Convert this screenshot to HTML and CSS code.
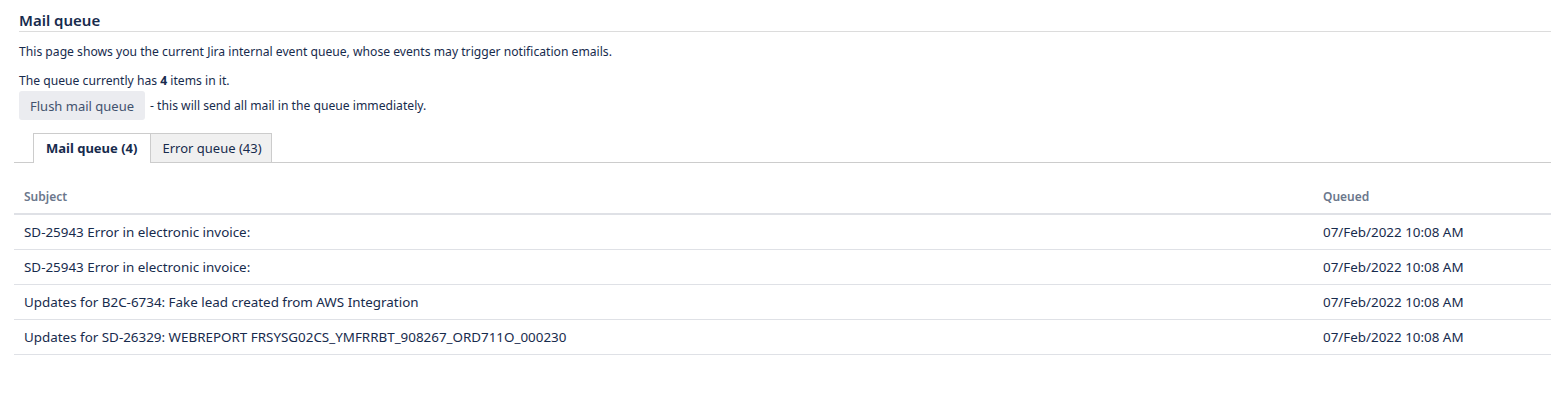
FILE: index.html
```html
<!DOCTYPE html>
<html lang="en">
<head>
    <meta charset="UTF-8">
    <title>Mail queue</title>
    <link rel="stylesheet" href="styles.css">
</head>
<body>
    <div class="page">
        <h2 class="page-title">Mail queue</h2>
        <p class="intro">This page shows you the current Jira internal event queue, whose events may trigger notification emails.</p>
        <p class="count">The queue currently has <strong>4</strong> items in it.</p>
        <div class="flush">
            <button class="flush-button">Flush mail queue</button>
            <span>- this will send all mail in the queue immediately.</span>
        </div>
    </div>

    <ul class="tabs">
        <li class="tab active">Mail queue (4)</li>
        <li class="tab">Error queue (43)</li>
    </ul>

    <table class="queue">
        <thead>
            <tr>
                <th>Subject</th>
                <th class="queued">Queued</th>
            </tr>
        </thead>
        <tbody>
            <tr>
                <td>SD-25943 Error in electronic invoice:</td>
                <td>07/Feb/2022 10:08 AM</td>
            </tr>
            <tr>
                <td>SD-25943 Error in electronic invoice:</td>
                <td>07/Feb/2022 10:08 AM</td>
            </tr>
            <tr>
                <td>Updates for B2C-6734: Fake lead created from AWS Integration</td>
                <td>07/Feb/2022 10:08 AM</td>
            </tr>
            <tr>
                <td>Updates for SD-26329: WEBREPORT FRSYSG02CS_YMFRRBT_908267_ORD711O_000230</td>
                <td>07/Feb/2022 10:08 AM</td>
            </tr>
        </tbody>
    </table>
</body>
</html>
```

FILE: styles.css
```css
body {
    margin: 0;
    padding: 0 0 0 14px;
    font-family: "Noto Sans", Arial, sans-serif;
    font-size: 12px;
    color: #172b4d;
    background: #fff;
}
.page {
    padding: 10px 0 0 5px;
}
.page-title {
    margin: 0;
    font-size: 15px;
    font-weight: 600;
    line-height: 20px;
    padding-bottom: 1px;
    border-bottom: 1px solid #dcdcdc;
}
.intro {
    margin: 11px 0 0;
    line-height: 18px;
    font-size: 12.15px;
}
.count {
    margin: 11px 0 0;
    line-height: 18px;
    font-size: 12.15px;
}
.flush {
    display: flex;
    align-items: center;
    gap: 5px;
    margin-top: 1px;
    font-size: 12.15px;
}
.flush-button {
    font-family: inherit;
    font-size: 13px;
    color: #42526e;
    background: #ebecf0;
    border: none;
    border-radius: 3px;
    height: 29px;
    padding: 0 11px;
}
.tabs {
    list-style: none;
    margin: 13px 0 0;
    padding: 0 0 0 19px;
    display: flex;
    align-items: flex-end;
    border-bottom: 1px solid #ccc;
}
.tab {
    font-size: 13px;
    line-height: 27px;
    padding: 1px 9px 0 11px;
    background: #f0f0f0;
    border: 1px solid #ccc;
    border-bottom: none;
    color: #172b4d;
}
.tab.active {
    background: #fff;
    font-weight: 700;
    border-right: none;
    padding: 0 13px 0 12px;
    margin-bottom: -1px;
    line-height: 29px;
}
.queue {
    width: 100%;
    border-collapse: collapse;
    margin-top: 15px;
}
.queue th {
    text-align: left;
    font-size: 12px;
    font-weight: 600;
    color: #6b778c;
    padding: 11px 10px 8px;
    line-height: 16px;
    border-bottom: 2px solid #dfe1e6;
}
.queue th.queued {
    width: 218px;
}
.queue td {
    font-size: 13.4px;
    line-height: 20px;
    padding: 7px 10px;
    border-bottom: 1px solid #dfe1e6;
}
```
